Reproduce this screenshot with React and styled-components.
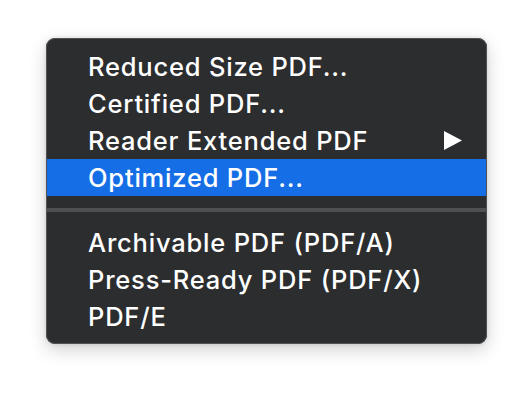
import React from "react";
import styled, { createGlobalStyle } from "styled-components";

const Global = createGlobalStyle`
  html, body { margin: 0; padding: 0; background: #ffffff; }
  body { font-family: Inter, "Noto Sans", sans-serif; }
`;

const Page = styled.div`
  width: 532px;
  height: 398px;
  padding: 38px 0 0 46px;
  box-sizing: border-box;
`;

const Menu = styled.div`
  width: 441px;
  box-sizing: border-box;
  padding: 10px 0 9px;
  background: #2b2d2f;
  border-radius: 9px;
  box-shadow: 0 0 0 1px #525355 inset, 0 6px 18px rgba(0, 0, 0, 0.18), 0 0 4px rgba(0, 0, 0, 0.12);
  display: flex;
  flex-direction: column;
`;

const Item = styled.div`
  height: 37px;
  display: flex;
  align-items: center;
  justify-content: space-between;
  padding: 0 24px 0 41px;
  margin: 0 1px;
  color: #ffffff;
  font-size: 25.5px;
  font-weight: 500;
  letter-spacing: 0.8px;
  background: ${(p) => (p.$active ? "#166ee6" : "transparent")};
`;

const Separator = styled.div`
  height: 28px;
  display: flex;
  align-items: center;
  margin: 0 1px;
  &::after {
    content: "";
    flex: 1;
    height: 4px;
    background: #4e4f51;
  }
`;

const Arrow = () => (
  <svg width="18" height="19" viewBox="0 0 18 19">
    <polygon points="0,0 18,9.5 0,19" fill="#ffffff" />
  </svg>
);

export default function App() {
  return (
    <>
      <Global />
      <Page>
        <Menu>
          <Item>Reduced Size PDF...</Item>
          <Item>Certified PDF...</Item>
          <Item>
            Reader Extended PDF
            <Arrow />
          </Item>
          <Item $active>Optimized PDF...</Item>
          <Separator />
          <Item>Archivable PDF (PDF/A)</Item>
          <Item>Press-Ready PDF (PDF/X)</Item>
          <Item>PDF/E</Item>
        </Menu>
      </Page>
    </>
  );
}
